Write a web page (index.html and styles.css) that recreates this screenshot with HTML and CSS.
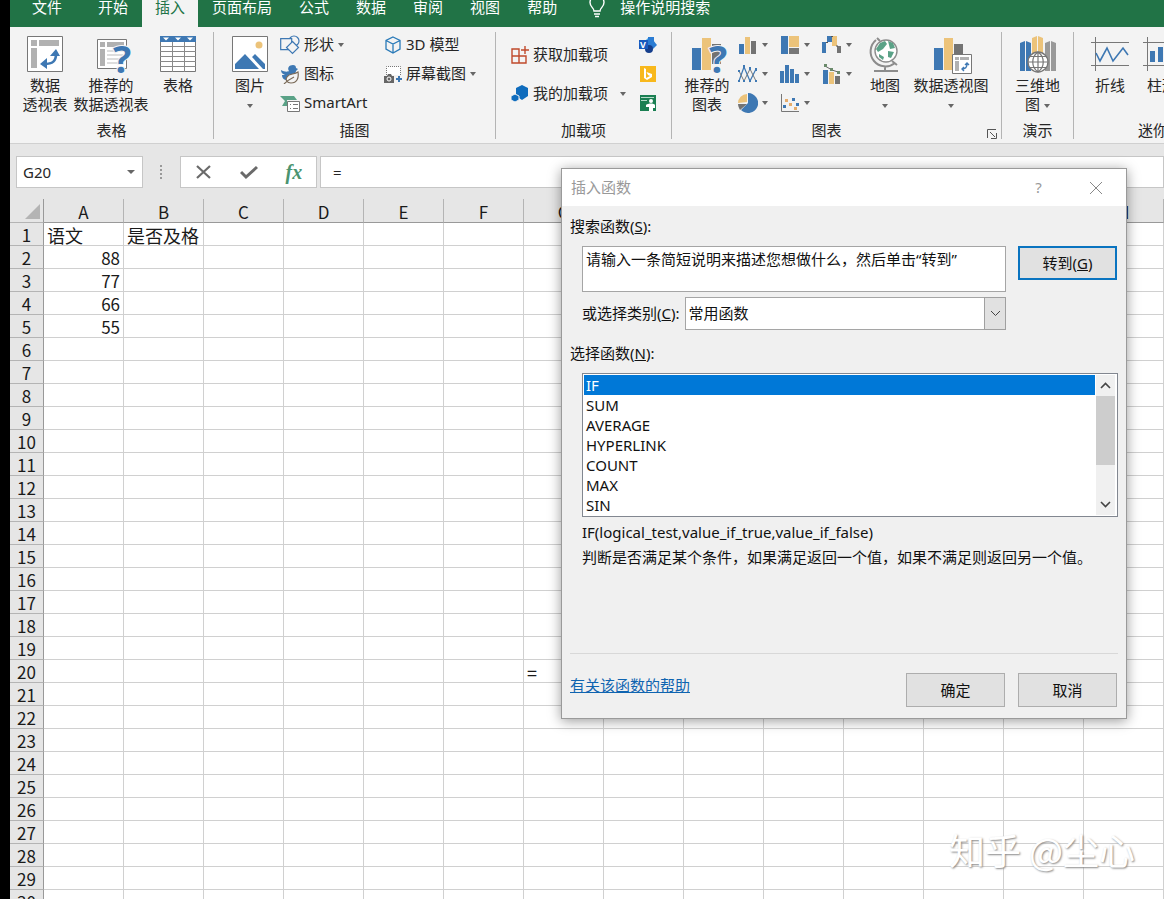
FILE: index.html
```html
<!DOCTYPE html>
<html lang="zh-CN">
<head>
<meta charset="utf-8">
<title>插入函数</title>
<link rel="stylesheet" href="styles.css">
</head>
<body>
<div class="app">
  <nav class="tabs">
    <button class="tab tab-file">文件</button>
    <button class="tab">开始</button>
    <button class="tab tab-active">插入</button>
    <button class="tab">页面布局</button>
    <button class="tab">公式</button>
    <button class="tab">数据</button>
    <button class="tab">审阅</button>
    <button class="tab">视图</button>
    <button class="tab">帮助</button>
    <button class="tab tab-search">
      <svg width="18" height="22" viewBox="0 0 18 22" fill="none" stroke="#fff" stroke-width="1.4"><path d="M6 15c0-3-4-4-4-8.500a7 7 0 0 1 14 0C16 11 12 12 12 15z"/><path d="M6 18h6M7 20.500h4"/></svg>
      操作说明搜索
    </button>
  </nav>

  <div class="ribbon">
    <section class="group group-tables">
      <div class="tools">
        <button class="big">
          <svg width="36" height="36" viewBox="0 0 36 36"><path d="M.5.500h35v35H.5z" fill="#fff" stroke="#777"/><path d="M4 4h6v6H4zM12 4h20v6H12zM4 12h6v20H4z" fill="#b1b1b1"/><path d="M17 28c9 0 12-3 12-10" fill="none" stroke="#3e78b3" stroke-width="2.600"/><path d="M23 20l6-7 4 7zM20 22l-7 6 7 5z" fill="#3e78b3"/></svg>
          <span>数据<br>透视表</span>
        </button>
        <button class="big">
          <svg width="40" height="36" viewBox="0 0 40 36"><path d="M6.500 3.500h29v29h-29z" fill="#fff" stroke="#777"/><path d="M9 6h5v5H9zM16 6h17v5H16zM9 13h5v17H9z" fill="#b1b1b1"/><path d="M16 15h16M16 19h16M16 23h16M16 27h16" stroke="#bbb"/><text class="query" x="22" y="37">?</text></svg>
          <span>推荐的<br>数据透视表</span>
        </button>
        <button class="big">
          <svg width="36" height="36" viewBox="0 0 36 36"><path d="M.5.500h35v35H.5z" fill="#fff" stroke="#777"/><path d="M0 0h36v6H0z" fill="#3e78b3"/><path d="M3 1.500h6l-3 3zM15 1.500h6l-3 3zM27 1.500h6l-3 3z" fill="#fff"/><path d="M12.500 6v30M24.500 6v30M0 10.500h36M0 15.500h36M0 20.500h36M0 25.500h36M0 30.500h36" stroke="#8a8a8a"/></svg>
          <span>表格</span>
        </button>
      </div>
      <h2 class="caption">表格</h2>
    </section>

    <section class="group group-pictures">
      <div class="tools">
        <button class="big">
          <svg width="36" height="36" viewBox="0 0 36 36"><path d="M.5.500h35v35H.5z" fill="#fff" stroke="#777"/><circle cx="27" cy="9" r="3.500" fill="#ecc37a"/><path d="M3 33v-5l10-10 14 15zM20 21l3-3 10 10v5h-2z" fill="#3e78b3"/></svg>
          <span>图片<br><i class="arrow"></i></span>
        </button>
        <div class="stack stack-shapes">
          <button class="small"><svg width="20" height="20" viewBox="0 0 20 20" fill="#f3f3f3" stroke="#3e78b3" stroke-width="1.200"><circle cx="14" cy="6" r="5"/><path d="M.7 3.700h11v11H.7z"/><path d="M12.500 6.500l6 6-6 6-6-6z"/></svg>形状<i class="arrow"></i></button>
          <button class="small"><svg width="20" height="20" viewBox="0 0 20 20"><path d="M1 6c3 2 7 2 8 1-2-3 0-6 4-6 2 0 3 1 3 3l2 1-2 2c0 3-5 4-7 7-3 4-7 1-7-3l3 0C2 10 1 8 1 6z" fill="#3e78b3"/><path d="M18 8c1 6-1 11-7 11-4 0-6-3-4-6 2-4 7-2 11-5zM4 20c3-3 6-5 10-7" fill="#f3f3f3" stroke="#7a6a58" stroke-width="1.200"/></svg>图标</button>
          <button class="small"><svg width="20" height="20" viewBox="0 0 20 20"><path d="M0 3h14l3 4H7v6H2l3-5z" fill="#5aa287"/><path d="M7.500 8.500h12v10h-12z" fill="#fff" stroke="#777"/><path d="M10 11.500h1M13 11.500h5M10 15.500h1M13 15.500h5" stroke="#777"/></svg>SmartArt</button>
        </div>
        <div class="stack stack-models">
          <button class="small"><svg width="18" height="18" viewBox="0 0 18 18" fill="none" stroke="#2a7ab8" stroke-width="1.300"><path d="M9 1l7 3.500v8.500L9 17l-7-4V4.500zM2 4.500L9 8l7-3.500M9 8v9"/></svg>3D 模型</button>
          <button class="small"><svg width="18" height="18" viewBox="0 0 18 18"><path d="M2.500 10V1.500h14V10" fill="#fff" stroke="#777" stroke-dasharray="1 1"/><path d="M0 11h3l1-2h3l1 2h2v7H0z" fill="#666"/><circle cx="5" cy="14" r="2" fill="#666" stroke="#fff"/><path d="M15 11v6M12 14h6" stroke="#3e78b3" stroke-width="2"/></svg>屏幕截图<i class="arrow"></i></button>
        </div>
      </div>
      <h2 class="caption">插图</h2>
    </section>

    <section class="group group-addins">
      <div class="tools">
        <div class="stack stack-addins">
          <button class="small"><svg width="18" height="20" viewBox="0 0 18 20" fill="none" stroke="#c0492b" stroke-width="1.400"><path d="M1 4h7v14H1zM1 11h14v7H8M8 11h7M14 1v8M10 5h8"/></svg>获取加载项</button>
          <button class="small"><svg width="18" height="20" viewBox="0 0 18 20" fill="#0f6cbd"><path d="M11 1l6 3v8l-6 4-6-4V4z"/><path d="M4 10l4 2v4l-4 2-4-2v-4z" stroke="#f3f3f3"/></svg>我的加载项<i class="arrow arrow-far"></i></button>
        </div>
        <div class="stack">
          <button class="small" aria-label="Visio"><svg width="18" height="16" viewBox="0 0 18 16"><path d="M10 0l4 4-4 4-4-4z" fill="#41a5ee"/><path d="M9 0h6v9H9z" fill="#2b7cd3"/><path d="M14 3l4 5-4 4-4-4z" fill="#2b7cd3"/><circle cx="10" cy="12" r="4" fill="#153e8c"/><path d="M0 3h9v9H0z" fill="#185abd"/><text class="badge-letter" x="1" y="11">V</text></svg></button>
          <button class="small" aria-label="必应地图"><svg width="18" height="16" viewBox="0 0 18 16"><path d="M1 0h16v16H1z" fill="#f8b81c"/><path d="M5 2v10l3 2 5-3V8L7.500 6l1.500 3 2 1-4 2V3z" fill="#fff"/></svg></button>
          <button class="small" aria-label="人员图"><svg width="18" height="16" viewBox="0 0 18 16"><path d="M1 0h16v16H1z" fill="#1a7f52"/><path d="M2 2.500h13M2 5.500h6" stroke="#b5dac8"/><circle cx="12" cy="6" r="2" fill="#fff"/><path d="M7 10c2-2 8-2 9 0v3h-2v3h-4v-4H7z" fill="#fff"/></svg></button>
        </div>
      </div>
      <h2 class="caption">加载项</h2>
    </section>

    <section class="group group-charts">
      <div class="tools">
        <button class="big">
          <svg width="30" height="36" viewBox="0 0 30 36"><path d="M0 12h9v22H0z" fill="#3e78b3"/><path d="M10 2h9v32h-9z" fill="#ecc37a"/><path d="M20 8h9v20h-9z" fill="#737373"/><text class="query" x="17" y="37">?</text></svg>
          <span>推荐的<br>图表</span>
        </button>
        <div class="chart-grid">
          <button class="small" aria-label="柱形图"><svg width="20" height="20" viewBox="0 0 20 20"><path d="M1 9h5v10H1z" fill="#3e78b3"/><path d="M7 2h5v17H7z" fill="#ecc37a"/><path d="M13 6h5v13h-5z" fill="#737373"/></svg><i class="arrow"></i></button>
          <button class="small" aria-label="层次结构图"><svg width="20" height="20" viewBox="0 0 20 20"><path d="M1 1h7v18H1z" fill="#3e78b3"/><path d="M9 1h10v11H9z" fill="#ecc37a"/><path d="M9 13h10v6H9z" fill="#777"/></svg><i class="arrow"></i></button>
          <button class="small" aria-label="瀑布图"><svg width="20" height="20" viewBox="0 0 20 20"><path d="M0 7h4v11H0zM5 1h5v6H5z" fill="#3e78b3"/><path d="M10 1h5v10h-5z" fill="#ecc37a"/><path d="M15 11h4v7h-4z" fill="#737373"/><path d="M4 7.500h2M9 1.500h2M14 11h2" stroke="#555"/></svg><i class="arrow"></i></button>
          <button class="small" aria-label="折线图"><svg width="20" height="20" viewBox="0 0 20 20"><path d="M1 17L6 3l6 14 6-12" fill="none" stroke="#3e78b3" stroke-width="1.200"/><path d="M1 7l5 10 6-12 6 12" fill="none" stroke="#777"/><path d="M0 16h2v2H0zM5 1h2v3H5zM11 16h2v2h-2zM17 4h2v3h-2zM0 6h2v2H0zM5 16h2v2H5zM11 3h2v3h-2zM17 16h2v2h-2z" fill="#3e78b3"/></svg><i class="arrow"></i></button>
          <button class="small" aria-label="统计图"><svg width="20" height="20" viewBox="0 0 20 20" fill="#3e78b3"><path d="M0 7h4v12H0zM5 1h4v18H5zM10 5h4v14h-4zM15 10h4v9h-4z"/></svg><i class="arrow"></i></button>
          <button class="small" aria-label="组合图"><svg width="20" height="20" viewBox="0 0 20 20"><path d="M1 6h5v14H1z" fill="#3e78b3"/><path d="M7 8h5v12H7z" fill="#ecc37a"/><path d="M13 12h5v8h-5z" fill="#737373"/><path d="M3 2l7 4 6 2" fill="none" stroke="#666"/><path d="M2 0h3v3H2zM8 4h3v3H8zM15 7h3v3h-3z" fill="#6b8a6b"/></svg><i class="arrow"></i></button>
          <button class="small" aria-label="饼图"><svg width="20" height="20" viewBox="0 0 20 20"><path d="M10 10V0a10 10 0 1 1-7 17z" fill="#3e78b3"/><path d="M9 9V1a9 9 0 0 0-9 9z" fill="#ecc37a"/><path d="M9 11H0c0 2 1 4 2 6z" fill="#737373"/></svg><i class="arrow"></i></button>
          <button class="small" aria-label="散点图"><svg width="20" height="20" viewBox="0 0 20 20"><path d="M1.500 1v17.500H19" fill="none" stroke="#777"/><path d="M12 5h3v3h-3zM3 12h3v3H3zM16 10h3v3h-3z" fill="#3e78b3"/><path d="M5 6h3v3H5zM9 10h3v3H9zM14 14h3v3h-3z" fill="#e6ac6b"/></svg><i class="arrow"></i></button>
        </div>
        <button class="big">
          <svg width="28" height="36" viewBox="0 0 28 36"><path d="M5 4a14 14 0 0 0 19 23M6 2l3 3M21 25l5 4M14 31v4M3 35h24" fill="none" stroke="#8c8c8c" stroke-width="2"/><circle cx="15" cy="15" r="11" fill="#fff" stroke="#8c8c8c" stroke-width="1.400"/><path d="M9 7l5-2 2 3-4 5-5 3-2-3zM17 5l5 2 2 5-5 1zM17 15l6 1-3 6-3-1zM8 18l5 3-1 3-4-3z" fill="#5aa287"/></svg>
          <span>地图<br><i class="arrow"></i></span>
        </button>
        <button class="big">
          <svg width="34" height="36" viewBox="0 0 34 36"><path d="M0 12h9v22H0z" fill="#3e78b3"/><path d="M10 2h9v32h-9z" fill="#ecc37a"/><path d="M20 8h9v20h-9z" fill="#737373"/><path d="M18.500 18.500h19v19h-19z" fill="#fff" stroke="#777"/><path d="M21 21h4v3h-4zM26 21h9v3h-9zM21 25h4v10h-4z" fill="#b1b1b1"/><path d="M28 33c4 0 5-2 5-5M31 29l2-2 2 2M30 31l-2 2 2 2" fill="none" stroke="#3e78b3" stroke-width="1.400"/></svg>
          <span>数据透视图<br><i class="arrow"></i></span>
        </button>
      </div>
      <div class="caption-row">
        <h2 class="caption">图表</h2>
        <button class="launcher" aria-label="图表选项"><svg width="10" height="10" viewBox="0 0 10 10" fill="none" stroke="#555"><path d="M.5 9V.500H9M3 3l5 5M9.500 4v5.500H4"/></svg></button>
      </div>
    </section>

    <section class="group group-demo">
      <div class="tools">
        <button class="big">
          <svg width="36" height="36" viewBox="0 0 36 36"><path d="M0 7l5-2v30H0zM6 5l5 2v28H6z" fill="#3e78b3"/><path d="M12 2l5-2v35h-5zM18 0l5 2v33h-5z" fill="#ecc37a"/><path d="M25 7l5-2v30h-5zM31 5l5 2v28h-5z" fill="#999"/><circle cx="18" cy="26" r="10" fill="#fff" stroke="#777" stroke-width="1.300"/><path d="M18 16v20M8 26h20M10 20.500h16M10 31.500h16M18 16c-7 5-7 15 0 20M18 16c7 5 7 15 0 20" fill="none" stroke="#777" stroke-width="1.200"/></svg>
          <span>三维地<br>图 <i class="arrow"></i></span>
        </button>
      </div>
      <h2 class="caption">演示</h2>
    </section>

    <section class="group group-spark">
      <div class="tools">
        <button class="big">
          <svg width="38" height="36" viewBox="0 0 38 36"><path d="M4.500 1v34M0 6.500h38M0 29.500h38" stroke="#777"/><path d="M5 17l4 8 7-13 6 13 10-13 5 7" fill="none" stroke="#3e78b3" stroke-width="1.600"/></svg>
          <span>折线</span>
        </button>
        <button class="big">
          <svg width="38" height="36" viewBox="0 0 38 36"><path d="M4.500 1v34M0 6.500h38M0 29.500h38" stroke="#777"/><path d="M7 15h5v11H7zM15 11h5v15h-5zM23 17h5v9h-5z" fill="#3e78b3"/></svg>
          <span>柱形</span>
        </button>
      </div>
      <h2 class="caption">迷你图</h2>
    </section>
  </div>

  <div class="formula-bar">
    <div class="name-box"><input type="text" value="G20" aria-label="名称框"><i class="arrow arrow-wide"></i></div>
    <svg class="grip" width="4" height="14" viewBox="0 0 4 14" fill="#999"><path d="M1 0h2v2H1zM1 4h2v2H1zM1 8h2v2H1zM1 12h2v2H1z"/></svg>
    <div class="entry">
      <button aria-label="取消输入"><svg width="18" height="16" viewBox="0 0 18 16" fill="none" stroke="#6a6a6a" stroke-width="2.200"><path d="M2 2l13 12M15 2L2 14"/></svg></button>
      <button aria-label="输入"><svg width="18" height="16" viewBox="0 0 18 16" fill="none" stroke="#6a6a6a" stroke-width="3"><path d="M1 8l5 5L17 3"/></svg></button>
      <button class="fx" aria-label="插入函数">fx</button>
    </div>
    <input class="formula" type="text" value="=" aria-label="编辑栏">
  </div>

  <main class="sheet">
    <table class="grid" id="grid"></table>
  </main>
</div>

<div class="dialog" role="dialog" aria-labelledby="dialog-title">
  <header class="dialog-bar">
    <h1 id="dialog-title">插入函数</h1>
    <button class="bar-button" aria-label="帮助">?</button>
    <button class="bar-button" aria-label="关闭"><svg width="14" height="14" viewBox="0 0 14 14" stroke="#888"><path d="M1 1l12 12M13 1L1 13"/></svg></button>
  </header>
  <div class="dialog-body">
    <label class="field-label" for="search">搜索函数(<u>S</u>):</label>
    <div class="search-row">
      <textarea id="search">请输入一条简短说明来描述您想做什么，然后单击“转到”</textarea>
      <button class="push push-default">转到(<u>G</u>)</button>
    </div>
    <div class="category-row">
      <label for="category">或选择类别(<u>C</u>):</label>
      <div class="select-wrap">
        <select id="category"><option>常用函数</option></select>
        <span class="select-arrow"><svg width="11" height="7" viewBox="0 0 11 7" fill="none" stroke="#444"><path d="M1 1l4.500 4.500L10 1"/></svg></span>
      </div>
    </div>
    <div class="field-label list-label" id="list-label">选择函数(<u>N</u>):</div>
    <div class="list">
      <ul role="listbox" aria-labelledby="list-label">
        <li role="option" aria-selected="true">IF</li>
        <li role="option">SUM</li>
        <li role="option">AVERAGE</li>
        <li role="option">HYPERLINK</li>
        <li role="option">COUNT</li>
        <li role="option">MAX</li>
        <li role="option">SIN</li>
      </ul>
      <div class="scroll">
        <button aria-label="向上"><svg width="11" height="7" viewBox="0 0 11 7" fill="none" stroke="#444" stroke-width="1.600"><path d="M1 6l4.500-4.500L10 6"/></svg></button>
        <div class="thumb"></div>
        <button aria-label="向下"><svg width="11" height="7" viewBox="0 0 11 7" fill="none" stroke="#444" stroke-width="1.600"><path d="M1 1l4.500 4.500L10 1"/></svg></button>
      </div>
    </div>
    <div class="about">
      <p>IF(logical_test,value_if_true,value_if_false)</p>
      <p>判断是否满足某个条件，如果满足返回一个值，如果不满足则返回另一个值。</p>
    </div>
    <footer class="dialog-foot">
      <a href="#help">有关该函数的帮助</a>
      <button class="push">确定</button>
      <button class="push">取消</button>
    </footer>
  </div>
</div>
<div class="watermark">知乎 @尘心</div>
<script src="grid.js"></script>
</body>
</html>
```
FILE: styles.css
```css
* { box-sizing: border-box; }

body {
  margin: 0;
  height: 100vh;
  overflow: hidden;
  position: relative;
  background: #000;
  color: #262626;
  font: 15px/19px "Noto Sans", "Noto Sans CJK SC", sans-serif;
}

button, input, select, textarea { font: inherit; color: inherit; }
button { padding: 0; border: 0; background: none; }
h1, h2, p, ul { margin: 0; padding: 0; font-size: inherit; font-weight: normal; }
svg { display: block; flex: none; }

.app {
  display: flex;
  flex-direction: column;
  height: 100%;
  margin-left: 10px;
  background: #e6e6e6;
}

/* Ribbon tabs */
.tabs {
  flex: none;
  display: flex;
  align-items: flex-end;
  gap: 1px;
  height: 27px;
  overflow: hidden;
  background: #217346;
}
.tab {
  flex: none;
  height: 40px;
  padding: 0 13px;
  color: #fff;
  white-space: nowrap;
}
.tab-file { padding: 0 22px; }
.tab-active { background: #f3f3f3; color: #217346; }
.tab-search { display: flex; align-items: center; gap: 14px; padding: 0 17px; }

/* Ribbon */
.ribbon {
  flex: none;
  display: flex;
  overflow: hidden;
  padding: 5px 0 4px;
  background: #f3f3f3;
  border-bottom: 1px solid #d0d0d0;
}
.group {
  flex: none;
  display: flex;
  flex-direction: column;
  border-right: 1px solid #b4b4b4;
}
.group-tables { width: 204px; }
.group-pictures { width: 282px; }
.group-addins { width: 176px; }
.group-charts { width: 330px; }
.group-demo { width: 72px; }
.group-spark { width: 174px; }
.tools { display: grid; height: 89px; }
.group-tables .tools { grid-template-columns: 50px 78px 52px; gap: 2px; padding-left: 10px; }
.group-pictures .tools { grid-template-columns: 52px 100px 1fr; gap: 4px; padding-left: 10px; }
.group-addins .tools { grid-template-columns: 120px 18px; gap: 8px; padding-left: 15px; }
.group-charts .tools { grid-template-columns: 50px 120px 42px 78px; gap: 6px; padding-left: 10px; }
.group-demo .tools { grid-template-columns: 1fr; }
.group-spark .tools { grid-template-columns: 52px 52px; padding-left: 10px; }

.big {
  display: flex;
  flex-direction: column;
  align-items: center;
  gap: 4px;
  padding-top: 4px;
  white-space: nowrap;
}
.big svg { overflow: visible; }
.stack { display: flex; flex-direction: column; }
.small {
  display: flex;
  align-items: center;
  gap: 4px;
  height: 29px;
  margin-top: -2px;
  margin-bottom: 2px;
  white-space: nowrap;
}
.stack-addins .small { height: 39px; margin-top: 3px; margin-bottom: -3px; }
.chart-grid {
  display: grid;
  grid-template-columns: repeat(3, 42px);
  grid-auto-rows: 29px;
}
.arrow {
  display: inline-block;
  border: 3px solid transparent;
  border-top: 4px solid #666;
  border-bottom: 0;
  vertical-align: middle;
}
.arrow-far { margin-left: 8px; }
.arrow-wide { border-left-width: 4px; border-right-width: 4px; }
.caption { text-align: center; line-height: 18px; }
.caption-row { display: flex; align-items: flex-end; }
.caption-row .caption { flex: 1; }
.launcher { width: 20px; padding: 0 0 0 6px; }
.query {
  font: bold 38px "Noto Sans", sans-serif;
  fill: #3e78b3;
  stroke: #f3f3f3;
  stroke-width: 2px;
  paint-order: stroke;
}
.badge-letter { font: bold 9px "Noto Sans", sans-serif; fill: #fff; }

/* Formula bar */
.formula-bar {
  flex: none;
  display: flex;
  align-items: center;
  height: 55px;
  padding: 12px 0 11px 6px;
}
.name-box, .entry, .formula {
  height: 32px;
  border: 1px solid #c6c6c6;
  background: #fff;
}
.name-box { display: flex; align-items: center; width: 127px; padding: 0 7px 0 6px; }
.name-box input { flex: 1; min-width: 0; padding: 0; border: 0; background: none; }
.grip { margin: 0 17px 0 16px; }
.entry { display: flex; align-items: center; justify-content: space-around; width: 137px; margin-right: 3px; }
.fx { font: italic bold 20px "Liberation Serif", serif; color: #4a9470; }
.formula { flex: 1; min-width: 0; padding: 0 12px; }

/* Sheet */
.sheet { flex: 1; min-height: 0; overflow: hidden; }
.grid {
  width: 1154px;
  table-layout: fixed;
  border-spacing: 0;
  background: #fff;
  color: #1a1a1a;
  font-family: "Noto Sans CJK SC", sans-serif;
}
.grid th, .grid td {
  width: 80px;
  height: 23px;
  padding: 2px 3px 0;
  border-right: 1px solid #d0d0d0;
  border-bottom: 1px solid #d0d0d0;
  font-size: 17px;
  line-height: 20px;
  font-weight: normal;
  white-space: nowrap;
}
.grid th { background: #e6e6e6; text-align: center; }
.grid thead th { height: 24px; border-right-color: #b4b4b4; border-bottom-color: #999; }
.grid th:first-child { width: 34px; padding: 2px 0 0; border-right-color: #999; border-bottom-color: #b4b4b4; }
.grid .text { font-size: 18px; }
.grid .number { text-align: right; }
.corner svg { margin: 0 3px 0 auto; }

/* Insert Function dialog */
.dialog {
  position: absolute;
  left: 561px;
  top: 168px;
  width: 566px;
  border: 1px solid #9a9a9a;
  background: #f0f0f0;
  box-shadow: 0 2px 12px rgba(0, 0, 0, 0.4);
  color: #111;
}
.dialog-bar { display: flex; align-items: center; height: 37px; padding: 0 2px 0 9px; background: #fff; color: #999; }
.dialog-bar h1 { flex: 1; }
.bar-button { display: flex; align-items: center; justify-content: center; width: 57px; height: 37px; }
.dialog-body { padding: 11px 8px; }
.field-label { display: block; }
.search-row { display: flex; gap: 12px; margin: 10px 1px 0 12px; }
.search-row textarea {
  display: block;
  flex: 1;
  height: 46px;
  padding: 3px;
  border: 1px solid #a5a5a5;
  background: #fff;
  resize: none;
  overflow: hidden;
}
.push { width: 99px; height: 34px; border: 1px solid #adadad; background: #e1e1e1; }
.push-default { border: 2px solid #0a74c0; }
.category-row { display: flex; align-items: center; gap: 5px; margin: 5px 112px 0 12px; }
.select-wrap { position: relative; flex: 1; }
.select-wrap select {
  appearance: none;
  display: block;
  width: 100%;
  height: 33px;
  padding: 0 3px;
  border: 1px solid #a5a5a5;
  border-radius: 0;
  background: #fff;
}
.select-arrow {
  position: absolute;
  right: 0;
  top: 0;
  display: flex;
  align-items: center;
  justify-content: center;
  width: 22px;
  height: 100%;
  border: 1px solid #a0a0a0;
  background: #e1e1e1;
  pointer-events: none;
}
.list-label { margin-top: 14px; }
.list { display: flex; margin: 10px 0 0 12px; padding: 1px; border: 1px solid #828790; background: #fff; }
.list ul { flex: 1; list-style: none; }
.list li { height: 20px; padding-left: 2px; line-height: 20px; }
.list li[aria-selected="true"] { background: #0078d7; color: #fff; }
.scroll { display: flex; flex-direction: column; width: 19px; margin: 0 1px; background: #f0f0f0; }
.scroll button { display: flex; align-items: center; justify-content: center; height: 21px; }
.thumb { height: 69px; margin-bottom: auto; background: #cdcdcd; }
.about { min-height: 136px; padding: 3px 0 0 12px; line-height: 25px; }
.dialog-foot { display: flex; gap: 13px; padding: 19px 1px 0 0; border-top: 1px solid #d8d8d8; }
.dialog-foot a { flex: 1; line-height: 25px; color: #0f64b0; }

.watermark {
  position: absolute;
  right: 29px;
  bottom: 27px;
  color: #fff;
  font: 36px/46px "Noto Sans CJK SC", sans-serif;
  text-shadow: 1px 1px 2px #888;
}
```
FILE: grid.js
```js
const columns = "ABCDEFGHIJKLMN".split("");
const cells = { A1: "语文", B1: "是否及格", A2: 88, A3: 77, A4: 66, A5: 55, G20: "=" };
const corner = '<svg width="15" height="15" viewBox="0 0 15 15"><path d="M15 0v15H0z" fill="#b4b4b4"/></svg>';

let html = `<thead><tr><th class="corner">${corner}</th>`;
html += columns.map((name) => `<th>${name}</th>`).join("");
html += "</tr></thead><tbody>";
for (let row = 1; row <= 30; row++) {
  html += `<tr><th>${row}</th>`;
  for (const name of columns) {
    const value = cells[name + row];
    const kind = typeof value === "number" ? "number" : "text";
    html += value === undefined ? "<td></td>" : `<td class="${kind}">${value}</td>`;
  }
  html += "</tr>";
}
document.getElementById("grid").innerHTML = html + "</tbody>";
```
